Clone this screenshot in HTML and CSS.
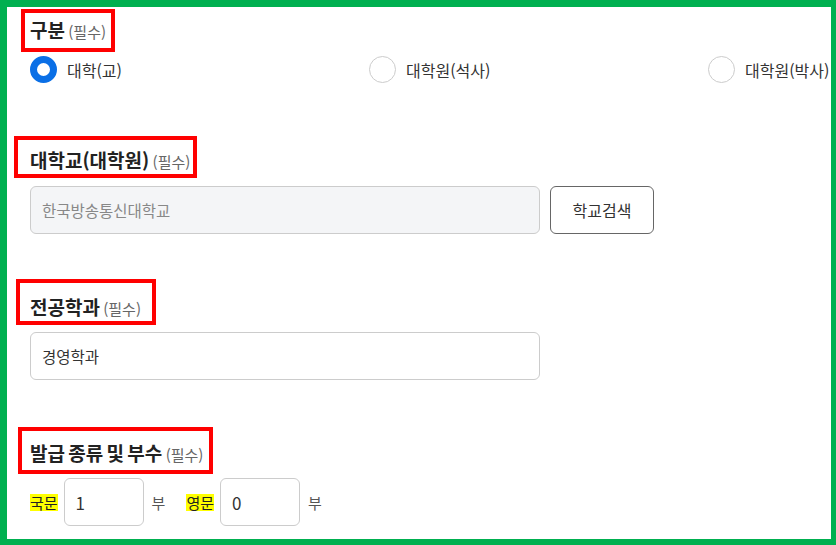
FILE: index.html
```html
<!DOCTYPE html>
<html lang="ko">
<head>
  <meta charset="UTF-8" />
  <title>증명서 신청</title>
  <link rel="stylesheet" href="styles.css">
</head>
<body>
  <div class="frame">
    <section class="field first">
      <h3 class="field-title"><span class="mark mark-1"></span>구분 <small>(필수)</small></h3>
      <div class="radios">
        <label class="radio"><span class="dot on"></span>대학(교)</label>
        <label class="radio"><span class="dot"></span>대학원(석사)</label>
        <label class="radio"><span class="dot"></span>대학원(박사)</label>
      </div>
    </section>

    <section class="field second">
      <h3 class="field-title"><span class="mark mark-2"></span>대학교(대학원) <small>(필수)</small></h3>
      <div class="row">
        <div class="input disabled">한국방송통신대학교</div>
        <button class="btn" type="button">학교검색</button>
      </div>
    </section>

    <section class="field">
      <h3 class="field-title"><span class="mark mark-3"></span>전공학과 <small>(필수)</small></h3>
      <div class="input">경영학과</div>
    </section>

    <section class="field">
      <h3 class="field-title"><span class="mark mark-4"></span>발급 종류 및 부수 <small>(필수)</small></h3>
      <div class="copies">
        <span class="lang">국문</span>
        <div class="input small">1</div>
        <span class="unit">부</span>
        <span class="lang">영문</span>
        <div class="input small">0</div>
        <span class="unit">부</span>
      </div>
    </section>
  </div>
</body>
</html>
```

FILE: styles.css
```css
* { box-sizing: border-box; }
body { margin: 0; font-family: "Noto Sans CJK KR", "Noto Sans", sans-serif; color: #222; background: #fff; }
.frame { width: 836px; height: 545px; overflow: hidden; border: solid #00b050; border-width: 7px 5px 6px 7px; padding: 9px 0 0 23px; }

.field { margin-top: 59px; }
.field.first { margin-top: 0; }
.field.second { margin-top: 63px; }
.field-title { position: relative; width: fit-content; margin: 0 0 11px; font-size: 19px; font-weight: 700; line-height: 28px; word-spacing: -2px; }
.field.first .field-title, .field.second .field-title { margin-bottom: 12px; }
.field-title small { font-size: 15px; font-weight: 400; color: #666; line-height: 1; word-spacing: 0; }

.mark { position: absolute; border: 4px solid #ff0000; }
.mark-1 { left: -9px; right: -9px; top: -7px; bottom: -8px; }
.mark-2 { left: -16px; right: -7px; top: -10px; bottom: -4px; }
.mark-3 { left: -14px; right: -15px; top: -14px; bottom: -4px; }
.mark-4 { left: -12px; right: -10px; top: -12px; bottom: -7px; }

.radios { display: grid; grid-template-columns: repeat(3, 339px); height: 27px; }
.radio { display: flex; align-items: center; gap: 10px; font-size: 16px; color: #333; white-space: nowrap; }
.dot { width: 27px; height: 27px; border-radius: 50%; border: 1px solid #ccc; background: #fff; }
.dot.on { border: 7px solid #0a6fe6; }

.row { display: flex; gap: 10px; }
.input { width: 510px; height: 48px; border: 1px solid #ccc; border-radius: 6px; padding: 0 11px; display: flex; align-items: center; font-size: 15.5px; color: #333; background: #fff; }
.input.disabled { background: #f4f5f7; color: #888; }
.btn { width: 104px; height: 48px; border: 1px solid #666; border-radius: 6px; background: #fff; font-family: inherit; font-size: 16px; color: #333; }

.copies { display: flex; align-items: center; }
.lang { background: #ffff00; font-size: 15px; color: #222; line-height: 17px; margin-right: 6px; }
.input.small { width: 80px; padding: 0 11px; font-size: 17px; }
.unit { font-size: 15px; color: #555; margin: 0 21px 0 8px; }
```
